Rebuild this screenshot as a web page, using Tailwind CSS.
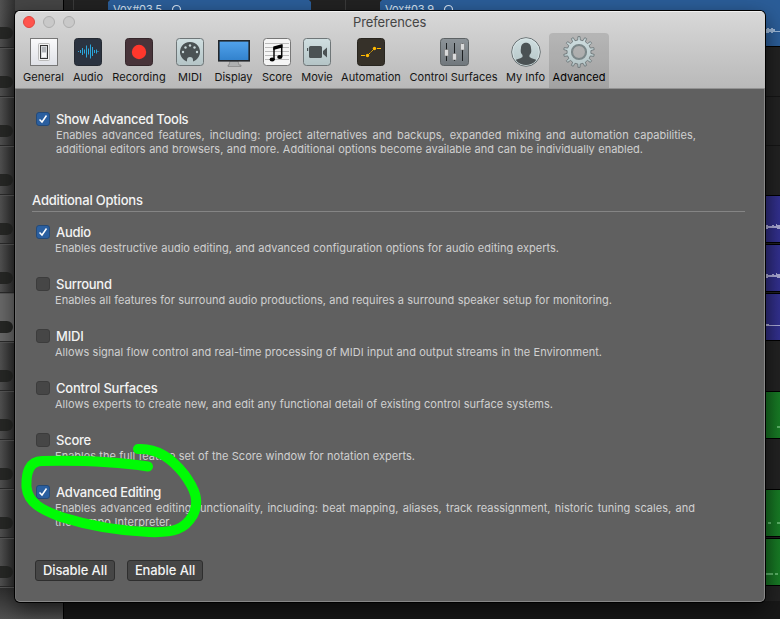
<!DOCTYPE html>
<html lang="en">
<head>
<meta charset="utf-8">
<title>Preferences</title>
<script src="https://cdn.jsdelivr.net/npm/@tailwindcss/browser@4"></script>
</head>
<body class="w-[780px] h-[619px] overflow-hidden bg-[#222] font-['Inter','Liberation_Sans',sans-serif]">
<main class="relative w-[780px] h-[619px] overflow-hidden">
  <!-- Arrangement behind the window -->
  <svg class="absolute inset-0" width="780" height="619" viewBox="0 0 780 619">
    <defs>
      <linearGradient id="side"><stop stop-color="#525252"/><stop offset="1" stop-color="#303030"/></linearGradient>
      <linearGradient id="sideLow" x2="0" y2="1"><stop stop-color="#303030"/><stop offset="1" stop-color="#505050"/></linearGradient>
      <linearGradient id="violet"><stop stop-color="#2c2a78"/><stop offset="1" stop-color="#35339a"/></linearGradient>
      <linearGradient id="green"><stop stop-color="#15691f"/><stop offset="1" stop-color="#198529"/></linearGradient>
      <pattern id="tracks" y="47" width="15" height="49" patternUnits="userSpaceOnUse">
        <path d="M0 .5h15" stroke="#2b2b2b"/><path d="M0 1.5h15" stroke="#575757"/>
        <rect x="-12" y="29" width="25" height="12" rx="6" fill="#272826"/>
      </pattern>
    </defs>
    <rect width="63" height="11" fill="#454545"/>
    <rect width="15" height="619" fill="url(#side)"/>
    <rect y="293" width="15" height="48" fill="#6a6a6a"/>
    <rect width="15" height="588" fill="url(#tracks)"/>
    <rect y="588" width="63" height="31" fill="url(#sideLow)"/>
    <rect x="63" y="601" width="717" height="18" fill="#181818"/>
    <path d="M63.500 0v11M63.500 602v17" stroke="#000"/>
    <path d="M73.500 0v11M345.500 0v11" stroke="#3a3a3a"/>
    <path d="M108 11V2l2-2h199l2 2v9zM380 11V2l2-2h398v46H380z" fill="#2b5d98"/>
    <path d="M766 46.500h14" stroke="#000"/>
    <path d="M766 31.500h14" stroke="#9db8d8"/><path d="M766 29h1v-1h2v1h2v-1h2v1h2v3h-2v1h-2v-1h-2v1h-3z" fill="#9db8d8"/>
    <path d="M766 96.500h14M766 145.500h14" stroke="#151515"/>
    <g fill="url(#violet)" stroke="#000"><rect x="760" y="195.500" width="30" height="47"/><rect x="760" y="244.500" width="30" height="47"/><rect x="760" y="293.500" width="30" height="47"/></g>
    <g fill="url(#green)" stroke="#000"><rect x="760" y="391.500" width="30" height="47"/><rect x="760" y="489.500" width="30" height="47"/><rect x="760" y="538.500" width="30" height="47"/></g>
    <g fill="#aaa9d4"><path d="M766 225h2v1h4v-1h2v1h2v-2h1v1h3v4h-3v-1h-9v1h-2zM766 274h2v1h4v-1h2v1h2v-2h1v1h3v4h-3v-1h-9v1h-2zM766 324h3v1h11v1h-14z"/></g>
    <path d="M777 426h3v2h-3zM768 522h3v2h-3zM777 522h3v2h-3zM766 573h7v2h-7zM775 573h3v2h-3z" fill="#5bb267"/>
    <g fill="#d6e3f2" font-size="11"><text x="113" y="12.500" textLength="49" lengthAdjust="spacing">Vox#03.5</text><text x="385" y="12.500" textLength="49" lengthAdjust="spacing">Vox#03.9</text></g>
    <g fill="none" stroke="#d6e3f2" stroke-width="1.200"><circle cx="176.500" cy="9.500" r="4"/><circle cx="448.500" cy="9.500" r="4"/></g>
  </svg>

  <!-- Preferences window -->
  <section class="absolute left-[15px] top-[11px] w-[750px] h-[591px] flex flex-col rounded-[5px] bg-[#606060] shadow-[0_0_0_1px_#000,0_8px_22px_#0009] overflow-hidden">
    <header class="h-[78px] shrink-0 flex flex-col bg-linear-to-b from-[#d8d8d8] to-[#b9b9b9] border-t border-t-[#f0f0f0] border-b border-b-[#929292]">
      <div class="h-[21px] flex items-center relative shrink-0">
        <div class="flex gap-2 pl-2 -mt-px">
          <i class="size-3 rounded-full bg-[#ff544d] border border-[#df453e]"></i>
          <i class="size-3 rounded-full bg-[#c9c9c9] border border-[#adadad]"></i>
          <i class="size-3 rounded-full bg-[#c9c9c9] border border-[#adadad]"></i>
        </div>
        <h1 class="absolute left-[338px] top-[2px] text-[13px] leading-4 tracking-[-0.1px] text-[#454545]">Preferences</h1>
      </div>
      <nav class="h-[55px] flex pl-1 text-[11px] leading-[14px] text-[#151515] whitespace-nowrap">
        <div class="w-[49px] flex flex-col items-center"><svg class="h-[37px] w-8 shrink-0" viewBox="0 0 32 37"><defs><linearGradient id="wh" x2="0" y2="1"><stop stop-color="#fafafb"/><stop offset="1" stop-color="#dfe1e7"/></linearGradient></defs><rect x="2.500" y="5.500" width="27" height="27" fill="url(#wh)" stroke="#777"/><rect x="10.500" y="10.500" width="11" height="17" rx="1" fill="#f2f2f2" stroke="#bbb"/><rect x="12.500" y="12.500" width="7" height="13" fill="#d6d8db" stroke="#333"/><path d="M14 14h4v5h-4z" fill="#b1b4b8"/><path d="M14 20h4v4h-4z" fill="#f8f8f8"/></svg><span class="tracking-[0.1px]">General</span></div>
        <div class="w-[40px] flex flex-col items-center"><svg class="h-[37px] w-8 shrink-0" viewBox="0 0 32 37"><rect x="2.500" y="5.500" width="27" height="27" rx="3" fill="#2b3340" stroke="#252a32"/><path d="M6.500 18v1M8.500 17v3M10.500 15v7M12.500 16.500v4M14.500 12.500v12M16.500 15.500v6M18.500 11.500v14M20.500 14v9M22.500 17v3M24.500 16.500v4M26 18v1" stroke="#2ba7dc"/></svg><span class="tracking-[0.02px]">Audio</span></div>
        <div class="w-[62px] flex flex-col items-center"><svg class="h-[37px] w-8 shrink-0" viewBox="0 0 32 37"><rect x="2.500" y="5.500" width="27" height="27" rx="3" fill="#48343a" stroke="#35272b"/><circle cx="16" cy="19" r="7.200" fill="#ff372c"/></svg><span class="tracking-[0.08px]">Recording</span></div>
        <div class="w-[40px] flex flex-col items-center"><svg class="h-[37px] w-8 shrink-0" viewBox="0 0 32 37"><defs><linearGradient id="pale" x2="0" y2="1"><stop stop-color="#d0dfe1"/><stop offset="1" stop-color="#b4c4c6"/></linearGradient></defs><rect x="2.500" y="5.500" width="27" height="27" rx="3" fill="url(#pale)" stroke="#6f7678"/><path d="M13 28.500A10 10 0 1 1 19 28.500V27a3 3 0 0 0-6 0z" fill="#4b5254"/><g fill="#c8d7d9"><circle cx="9" cy="19" r="1.200"/><circle cx="11.500" cy="14.500" r="1.200"/><circle cx="16" cy="12.500" r="1.200"/><circle cx="20.500" cy="14.500" r="1.200"/><circle cx="23" cy="19" r="1.200"/></g></svg><span>MIDI</span></div>
        <div class="w-[47px] flex flex-col items-center"><svg class="h-[37px] w-8 shrink-0" viewBox="0 0 32 37"><defs><linearGradient id="screen" x2="0" y2="1"><stop stop-color="#52a3ec"/><stop offset="1" stop-color="#3181cc"/></linearGradient></defs><path d="M12 28h8l1 4h2v1.500H10V32h1z" fill="#aeb0b1" stroke="#7b7b7b" stroke-width=".6"/><rect x=".8" y="7.800" width="30.400" height="20" fill="url(#screen)" stroke="#22272c" stroke-width="1.600"/></svg><span class="tracking-[0.02px]">Display</span></div>
        <div class="w-[40px] flex flex-col items-center"><svg class="h-[37px] w-8 shrink-0" viewBox="0 0 32 37"><rect x="2.500" y="5.500" width="27" height="27" rx="3" fill="#f5f5f5" stroke="#777"/><path d="M4 10.500h24M4 14.500h24M4 18.500h24M4 22.500h24M4 26.500h24" stroke="#bbb"/><path d="M20.700 12v12M13 14.500v12.500" stroke="#080808" stroke-width="1.500"/><path d="M12.300 13.500l9.200-2.500v3.500l-9.200 2.500z"/><ellipse cx="11.200" cy="26.500" rx="2.600" ry="2"/><ellipse cx="18.800" cy="24" rx="2.600" ry="2"/></svg><span class="tracking-[-0.02px]">Score</span></div>
        <div class="w-[40px] flex flex-col items-center"><svg class="h-[37px] w-8 shrink-0" viewBox="0 0 32 37"><rect x="2.500" y="5.500" width="27" height="27" rx="3" fill="url(#pale)" stroke="#6f7678"/><rect x="8" y="13" width="13" height="12" rx="1.500" fill="#4b5254"/><path d="M6 15h1.200v3H6zM22 18l4-3.500v10L22 21z" fill="#4b5254"/></svg><span>Movie</span></div>
        <div class="w-[68px] flex flex-col items-center"><svg class="h-[37px] w-8 shrink-0" viewBox="0 0 32 37"><rect x="2.500" y="5.500" width="27" height="27" rx="3" fill="#363129" stroke="#28251f"/><path d="M6 22.500h4M22 15.500h4" stroke="#ffb900"/><path d="M12.500 22.500l7-7" stroke="#ffb900" stroke-dasharray="1.500 .7"/><circle cx="12.500" cy="22.500" r="1.700" fill="#ffb900"/><circle cx="19.500" cy="15.500" r="1.700" fill="#ffb900"/></svg><span class="tracking-[0.05px]">Automation</span></div>
        <div class="w-[97px] flex flex-col items-center"><svg class="h-[37px] w-8 shrink-0" viewBox="0 0 32 37"><defs><linearGradient id="slate" x2="0" y2="1"><stop stop-color="#8c9398"/><stop offset="1" stop-color="#71787d"/></linearGradient></defs><rect x="2.500" y="5.500" width="28" height="27" rx="3" fill="url(#slate)" stroke="#5d6264"/><path d="M8.500 10v18M16.500 10v18M24.500 10v18" stroke="#1d2022"/><g fill="#d9dadb" stroke="#666" stroke-width=".5"><rect x="6.500" y="16.500" width="4" height="6.500" rx=".5"/><rect x="14.500" y="20.500" width="4" height="6.500" rx=".5"/><rect x="22.500" y="10.500" width="4" height="6.500" rx=".5"/></g></svg><span class="tracking-[0.03px]">Control Surfaces</span></div>
        <div class="w-[47px] flex flex-col items-center"><svg class="h-[37px] w-8 shrink-0" viewBox="0 0 32 37"><defs><clipPath id="head"><circle cx="16" cy="19" r="13"/></clipPath></defs><circle cx="16" cy="19" r="14.300" fill="url(#pale)" stroke="#697173"/><circle cx="16" cy="19" r="13.300" fill="none" stroke="#e2edee" stroke-width=".6"/><path clip-path="url(#head)" d="M4 33v-5c2-2 6-2 8.500-4v-2c-2-2-2-4-1.500-7 0-7 10-7 10 0 .5 3 .5 5-1.500 7v2C22 26 26 26 28 28v5z" fill="#4b5254"/></svg><span class="tracking-[-0.02px]">My Info</span></div>
        <div class="w-[60px] flex flex-col items-center rounded-t-[4px] bg-black/12"><svg class="h-[37px] w-8 shrink-0" viewBox="0 0 32 37"><g transform="translate(16 19)" stroke="#667072" stroke-width=".8" fill="url(#pale)"><path id="cog" fill-rule="evenodd" d=""/><circle r="7.300" fill="none" stroke="#7b8789" stroke-width="1.600"/></g></svg><span class="tracking-[0.03px] text-black">Advanced</span></div>
      </nav>
    </header>

    <div class="flex-1 border-x border-b border-l-[#6e6e6e] border-r-[#888] border-b-[#888] rounded-b-[5px] pl-4 text-[11px] leading-[14px] tracking-[0.02px] text-[#d0d0d0]">
      <div class="flex pt-[22px] h-[103px] pl-1">
        <svg class="size-[14px] shrink-0 mt-px" viewBox="0 0 14 14"><rect x=".5" y=".5" width="13" height="13" rx="2.500" fill="#2b5f9f" stroke="#244a78"/><path d="M3.500 7.500L6 10l4.500-6.500" fill="none" stroke="#fff" stroke-width="1.500"/></svg>
        <div class="pl-[6px] w-[646px]"><h2 class="text-[13px] leading-4 font-medium tracking-[-0.3px] text-[#f3f3f3]">Show Advanced Tools</h2>
        <p class="pt-px w-[640px] whitespace-nowrap [text-align-last:justify]">Enables advanced features, including: project alternatives and backups, expanded mixing and automation capabilities,</p><p class="w-[587px] whitespace-nowrap tracking-[-0.01px] [text-align-last:justify]">additional editors and browsers, and more. Additional options become available and can be individually enabled.</p></div>
      </div>
      <h2 class="w-[713px] h-5 border-b border-[#858585] text-[13px] leading-4 font-medium tracking-[-0.2px] text-[#f3f3f3]">Additional Options</h2>
      <div class="flex flex-col pl-1 pt-3">
        <div class="flex h-[52px]">
          <svg class="size-[14px] shrink-0 mt-px" viewBox="0 0 14 14"><rect x=".5" y=".5" width="13" height="13" rx="2.500" fill="#2b5f9f" stroke="#244a78"/><path d="M3.500 7.500L6 10l4.500-6.500" fill="none" stroke="#fff" stroke-width="1.500"/></svg>
          <div class="pl-[5px]"><h3 class="pl-px text-[13px] leading-4 font-medium tracking-[-0.25px] text-[#f3f3f3]">Audio</h3><p class="pt-px w-[504px] whitespace-nowrap [text-align-last:justify]">Enables destructive audio editing, and advanced configuration options for audio editing experts.</p></div>
        </div>
        <div class="flex h-[52px]">
          <i class="size-[14px] shrink-0 mt-px rounded-[3px] bg-[#464646] border border-[#3c3c3c]"></i>
          <div class="pl-[5px]"><h3 class="pl-px text-[13px] leading-4 font-medium tracking-[-0.25px] text-[#f3f3f3]">Surround</h3><p class="pt-px w-[557px] whitespace-nowrap [text-align-last:justify]">Enables all features for surround audio productions, and requires a surround speaker setup for monitoring.</p></div>
        </div>
        <div class="flex h-[52px]">
          <i class="size-[14px] shrink-0 mt-px rounded-[3px] bg-[#464646] border border-[#3c3c3c]"></i>
          <div class="pl-[5px]"><h3 class="pl-px text-[13px] leading-4 font-medium tracking-[-0.2px] text-[#f3f3f3]">MIDI</h3><p class="pt-px w-[547px] whitespace-nowrap [text-align-last:justify]">Allows signal flow control and real-time processing of MIDI input and output streams in the Environment.</p></div>
        </div>
        <div class="flex h-[52px]">
          <i class="size-[14px] shrink-0 mt-px rounded-[3px] bg-[#464646] border border-[#3c3c3c]"></i>
          <div class="pl-[5px]"><h3 class="pl-px text-[13px] leading-4 font-medium tracking-[-0.2px] text-[#f3f3f3]">Control Surfaces</h3><p class="pt-px w-[498px] whitespace-nowrap [text-align-last:justify]">Allows experts to create new, and edit any functional detail of existing control surface systems.</p></div>
        </div>
        <div class="flex h-[52px]">
          <i class="size-[14px] shrink-0 mt-px rounded-[3px] bg-[#464646] border border-[#3c3c3c]"></i>
          <div class="pl-[5px]"><h3 class="pl-px text-[13px] leading-4 font-medium tracking-[-0.25px] text-[#f3f3f3]">Score</h3><p class="pt-px w-[360px] whitespace-nowrap [text-align-last:justify]">Enables the full feature set of the Score window for notation experts.</p></div>
        </div>
        <div class="flex h-[76px]">
          <svg class="size-[14px] shrink-0 mt-px" viewBox="0 0 14 14"><rect x=".5" y=".5" width="13" height="13" rx="2.500" fill="#2b5f9f" stroke="#244a78"/><path d="M3.500 7.500L6 10l4.500-6.500" fill="none" stroke="#fff" stroke-width="1.500"/></svg>
          <div class="pl-[5px]"><h3 class="pl-px text-[13px] leading-4 font-medium tracking-[-0.26px] text-[#f3f3f3]">Advanced Editing</h3><p class="pt-px w-[640px] whitespace-nowrap [text-align-last:justify]">Enables advanced editing functionality, including: beat mapping, aliases, track reassignment, historic tuning scales, and</p><p class="w-[117px] whitespace-nowrap [text-align-last:justify]">the Tempo Interpreter.</p></div>
        </div>
      </div>
      <div class="flex gap-3 pl-[3px] text-[13px] tracking-[-0.1px] font-medium text-[#f3f3f3]">
        <button class="w-20 h-[21px] rounded-[3px] border border-[#2e2e2e] bg-[#464646] leading-[19px] whitespace-nowrap">Disable All</button>
        <button class="w-[76px] h-[21px] rounded-[3px] border border-[#2e2e2e] bg-[#464646] leading-[19px] whitespace-nowrap">Enable All</button>
      </div>
    </div>
  </section>

  <!-- Freehand marker ring -->
  <svg class="absolute inset-0 pointer-events-none" width="780" height="619" viewBox="0 0 780 619">
    <path d="M148 466.500C125 463 95 460 42 461C29 461 26 473 26.500 487C28 503 42 510 61 517C90 526 120 531 149 532C174 533 185 529 193 515C200 501 195 489 184 474C170 456 154 448 138 449" fill="none" stroke="#00fb05" stroke-width="10" stroke-linecap="round" stroke-linejoin="round"/>
  </svg>
</main>
<script>
  // Gear outline: fourteen teeth around a ring with an open hub.
  const teeth = 14, pts = [];
  for (let i = 0; i < teeth; i++) {
    for (const [r, o] of [[12, -0.24], [15.4, -0.15], [15.4, 0.15], [12, 0.24]]) {
      const a = (i + o) / teeth * 2 * Math.PI - Math.PI / 2;
      pts.push((r * Math.cos(a)).toFixed(2) + ' ' + (r * Math.sin(a)).toFixed(2));
    }
  }
  document.getElementById('cog').setAttribute('d', 'M' + pts.join('L') + 'ZM-6.500 0a6.500 6.500 0 1 0 13 0a6.500 6.500 0 1 0-13 0Z');
</script>
</body>
</html>
